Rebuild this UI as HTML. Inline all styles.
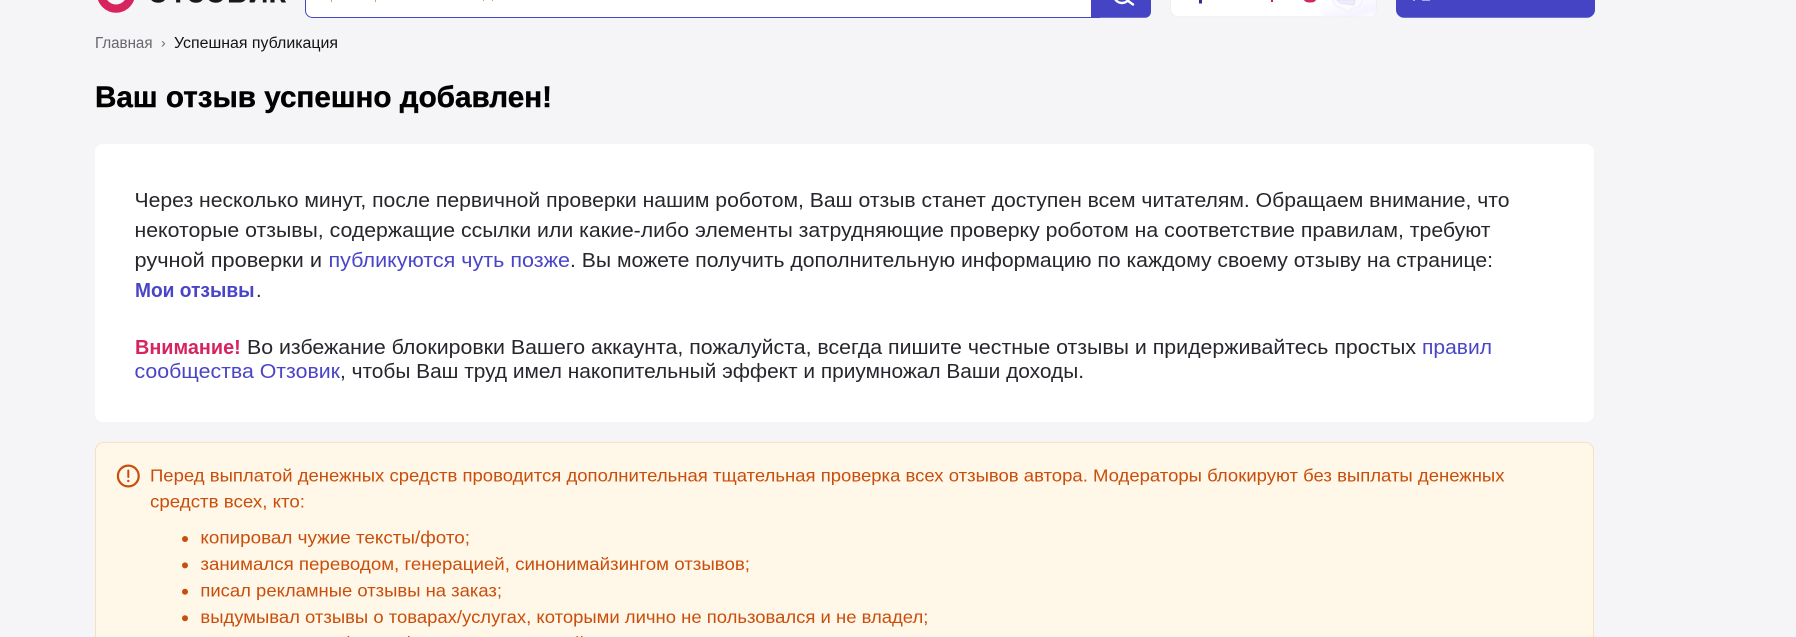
<!DOCTYPE html>
<html lang="ru">
<head>
<meta charset="utf-8">
<title>Ваш отзыв успешно добавлен!</title>
<style>
html,body{margin:0;padding:0;width:1796px;height:637px;overflow:hidden;background:#f5f5f7}
svg{display:block;position:absolute;left:0;top:0;overflow:hidden}
text{font-family:"Liberation Sans","Noto Sans CJK SC",sans-serif;white-space:pre}
.p{font-size:20px;fill:#26262c}
.l{font-size:20px;fill:#4a45c8}
.w{font-size:17.5px;fill:#c94e0c}
</style>
</head>
<body>
<svg width="1796" height="637" viewBox="0 0 1796 637" xmlns="http://www.w3.org/2000/svg">
<defs>
<linearGradient id="g" x1="0.55" y1="0.2" x2="1" y2="1">
<stop offset="0" stop-color="#ffffff"/>
<stop offset="0.75" stop-color="#f5f3ff"/>
<stop offset="1" stop-color="#ffffff"/>
</linearGradient>
</defs>

<!-- Logo -->
<circle cx="116" cy="-6.4" r="15" fill="none" stroke="#d6245f" stroke-width="8.2"/>
<text x="147" y="2.5" font-size="32" font-weight="700" fill="#17171c" textLength="139" lengthAdjust="spacingAndGlyphs">ОТЗОВИК</text>

<!-- Search -->
<rect x="305.5" y="-30" width="800" height="47.5" rx="7" fill="#fff" stroke="#4644c4" stroke-width="1"/>
<rect x="331" y="0" width="1" height="2" fill="#e2985a"/>
<rect x="375" y="0" width="1" height="2" fill="#e2985a"/>
<rect x="483" y="0" width="1" height="1" fill="#e2985a"/>
<rect x="492" y="0" width="1" height="1" fill="#e2985a"/>
<path d="M1091 -30H1145a6 6 0 0 1 6 6V11.7a6 6 0 0 1 -6 6H1091Z" fill="#4444c4"/>
<circle cx="1122" cy="-5" r="8" fill="none" stroke="#fff" stroke-width="2.4"/>
<path d="M1127.5 0.5L1133 4.5" fill="none" stroke="#fff" stroke-width="2.4" stroke-linecap="round"/>

<!-- Promo card -->
<rect x="1170.5" y="-30" width="206" height="46.8" rx="8" fill="#fff" stroke="#efeff4" stroke-width="1"/>
<rect x="1320" y="-10" width="56" height="26.5" rx="7" fill="url(#g)"/>
<rect x="1199" y="0" width="3" height="3.5" fill="#3a2a8a"/>
<rect x="1271" y="0" width="2" height="2" fill="#c4205c"/>
<path d="M1304 0H1316Q1315 2.5 1310 2.5Q1305 2.5 1304 0Z" fill="#d6245f"/>
<path d="M1332 -4Q1332 7 1342 8L1348 12L1353 8Q1363 7 1363 -4Z" fill="#fbfaff" stroke="#f0effc" stroke-width="1"/>
<path d="M1337 0L1355 0L1354 5L1340 3Z" fill="#eeedfc" stroke="#dfdef7" stroke-width="0.8"/>

<!-- Blue button -->
<path d="M1396 -30H1595V9.7a8 8 0 0 1 -8 8H1404a8 8 0 0 1 -8 -8Z" fill="#4444c4"/>
<rect x="1413" y="0" width="2" height="1" fill="#a9a9e6"/>
<rect x="1422" y="0" width="8" height="1" fill="#a9a9e6"/>

<!-- Breadcrumbs -->
<text x="95" y="48" font-size="15.5" fill="#66666c" textLength="57.5" lengthAdjust="spacingAndGlyphs">Главная</text>
<text x="161" y="47.5" font-size="14" fill="#66666c">›</text>
<text x="174" y="48" font-size="15.5" fill="#131316" textLength="164" lengthAdjust="spacingAndGlyphs">Успешная публикация</text>

<!-- Title -->
<text x="95" y="107" font-size="30" font-weight="700" fill="#000" stroke="#000" stroke-width="0.4" textLength="457" lengthAdjust="spacingAndGlyphs">Ваш отзыв успешно добавлен!</text>

<!-- Main card -->
<rect x="95" y="144" width="1499" height="278" rx="8" fill="#fff"/>
<text class="p" x="134.5" y="207" textLength="1375" lengthAdjust="spacingAndGlyphs">Через несколько минут, после первичной проверки нашим роботом, Ваш отзыв станет доступен всем читателям. Обращаем внимание, что</text>
<text class="p" x="134.5" y="237" textLength="1356" lengthAdjust="spacingAndGlyphs">некоторые отзывы, содержащие ссылки или какие-либо элементы затрудняющие проверку роботом на соответствие правилам, требуют</text>
<text class="p" x="134.5" y="267" textLength="187.5" lengthAdjust="spacingAndGlyphs">ручной проверки и</text>
<text class="l" x="328.5" y="267" textLength="241.5" lengthAdjust="spacingAndGlyphs">публикуются чуть позже</text>
<text class="p" x="570" y="267" textLength="923" lengthAdjust="spacingAndGlyphs">. Вы можете получить дополнительную информацию по каждому своему отзыву на странице:</text>
<text class="l" x="135" y="297" font-weight="700" textLength="119.5" lengthAdjust="spacingAndGlyphs">Мои отзывы</text>
<text class="p" x="256" y="297">.</text>

<text x="135" y="354" font-size="20" font-weight="700" fill="#d6245f" textLength="105.7" lengthAdjust="spacingAndGlyphs">Внимание!</text>
<text class="p" x="247" y="354" textLength="1169" lengthAdjust="spacingAndGlyphs">Во избежание блокировки Вашего аккаунта, пожалуйста, всегда пишите честные отзывы и придерживайтесь простых</text>
<text class="l" x="1422" y="354" textLength="70" lengthAdjust="spacingAndGlyphs">правил</text>
<text class="l" x="134.5" y="378" textLength="205.5" lengthAdjust="spacingAndGlyphs">сообщества Отзовик</text>
<text class="p" x="340" y="378" textLength="744" lengthAdjust="spacingAndGlyphs">, чтобы Ваш труд имел накопительный эффект и приумножал Ваши доходы.</text>

<!-- Warning box -->
<path d="M95.5 660V450.5a8 8 0 0 1 8 -8H1585.5a8 8 0 0 1 8 8V660Z" fill="#fff7e8" stroke="#f6e0c2" stroke-width="1"/>
<circle cx="128.3" cy="476" r="10.4" fill="none" stroke="#c94e0c" stroke-width="2.2"/>
<path d="M128.3 470.5V477" fill="none" stroke="#c94e0c" stroke-width="2" stroke-linecap="round"/>
<circle cx="128.3" cy="481" r="1.2" fill="#c94e0c"/>
<text class="w" x="150" y="481.5" textLength="1354.5" lengthAdjust="spacingAndGlyphs">Перед выплатой денежных средств проводится дополнительная тщательная проверка всех отзывов автора. Модераторы блокируют без выплаты денежных</text>
<text class="w" x="150" y="507.5" textLength="155" lengthAdjust="spacingAndGlyphs">средств всех, кто:</text>

<circle cx="185" cy="539" r="3" fill="#c94e0c"/>
<text class="w" x="200.4" y="543.5" textLength="269.6" lengthAdjust="spacingAndGlyphs">копировал чужие тексты/фото;</text>
<circle cx="185" cy="565.4" r="3" fill="#c94e0c"/>
<text class="w" x="200.4" y="570" textLength="549.6" lengthAdjust="spacingAndGlyphs">занимался переводом, генерацией, синонимайзингом отзывов;</text>
<circle cx="185" cy="591.8" r="3" fill="#c94e0c"/>
<text class="w" x="200.4" y="596.4" textLength="301.6" lengthAdjust="spacingAndGlyphs">писал рекламные отзывы на заказ;</text>
<circle cx="185" cy="618.2" r="3" fill="#c94e0c"/>
<text class="w" x="200.4" y="622.8" textLength="728" lengthAdjust="spacingAndGlyphs">выдумывал отзывы о товарах/услугах, которыми лично не пользовался и не владел;</text>
<text class="w" x="200.4" y="649" textLength="384" lengthAdjust="spacingAndGlyphs">писал отзывы на фото и фильмы других людей</text>
</svg>
</body>
</html>
